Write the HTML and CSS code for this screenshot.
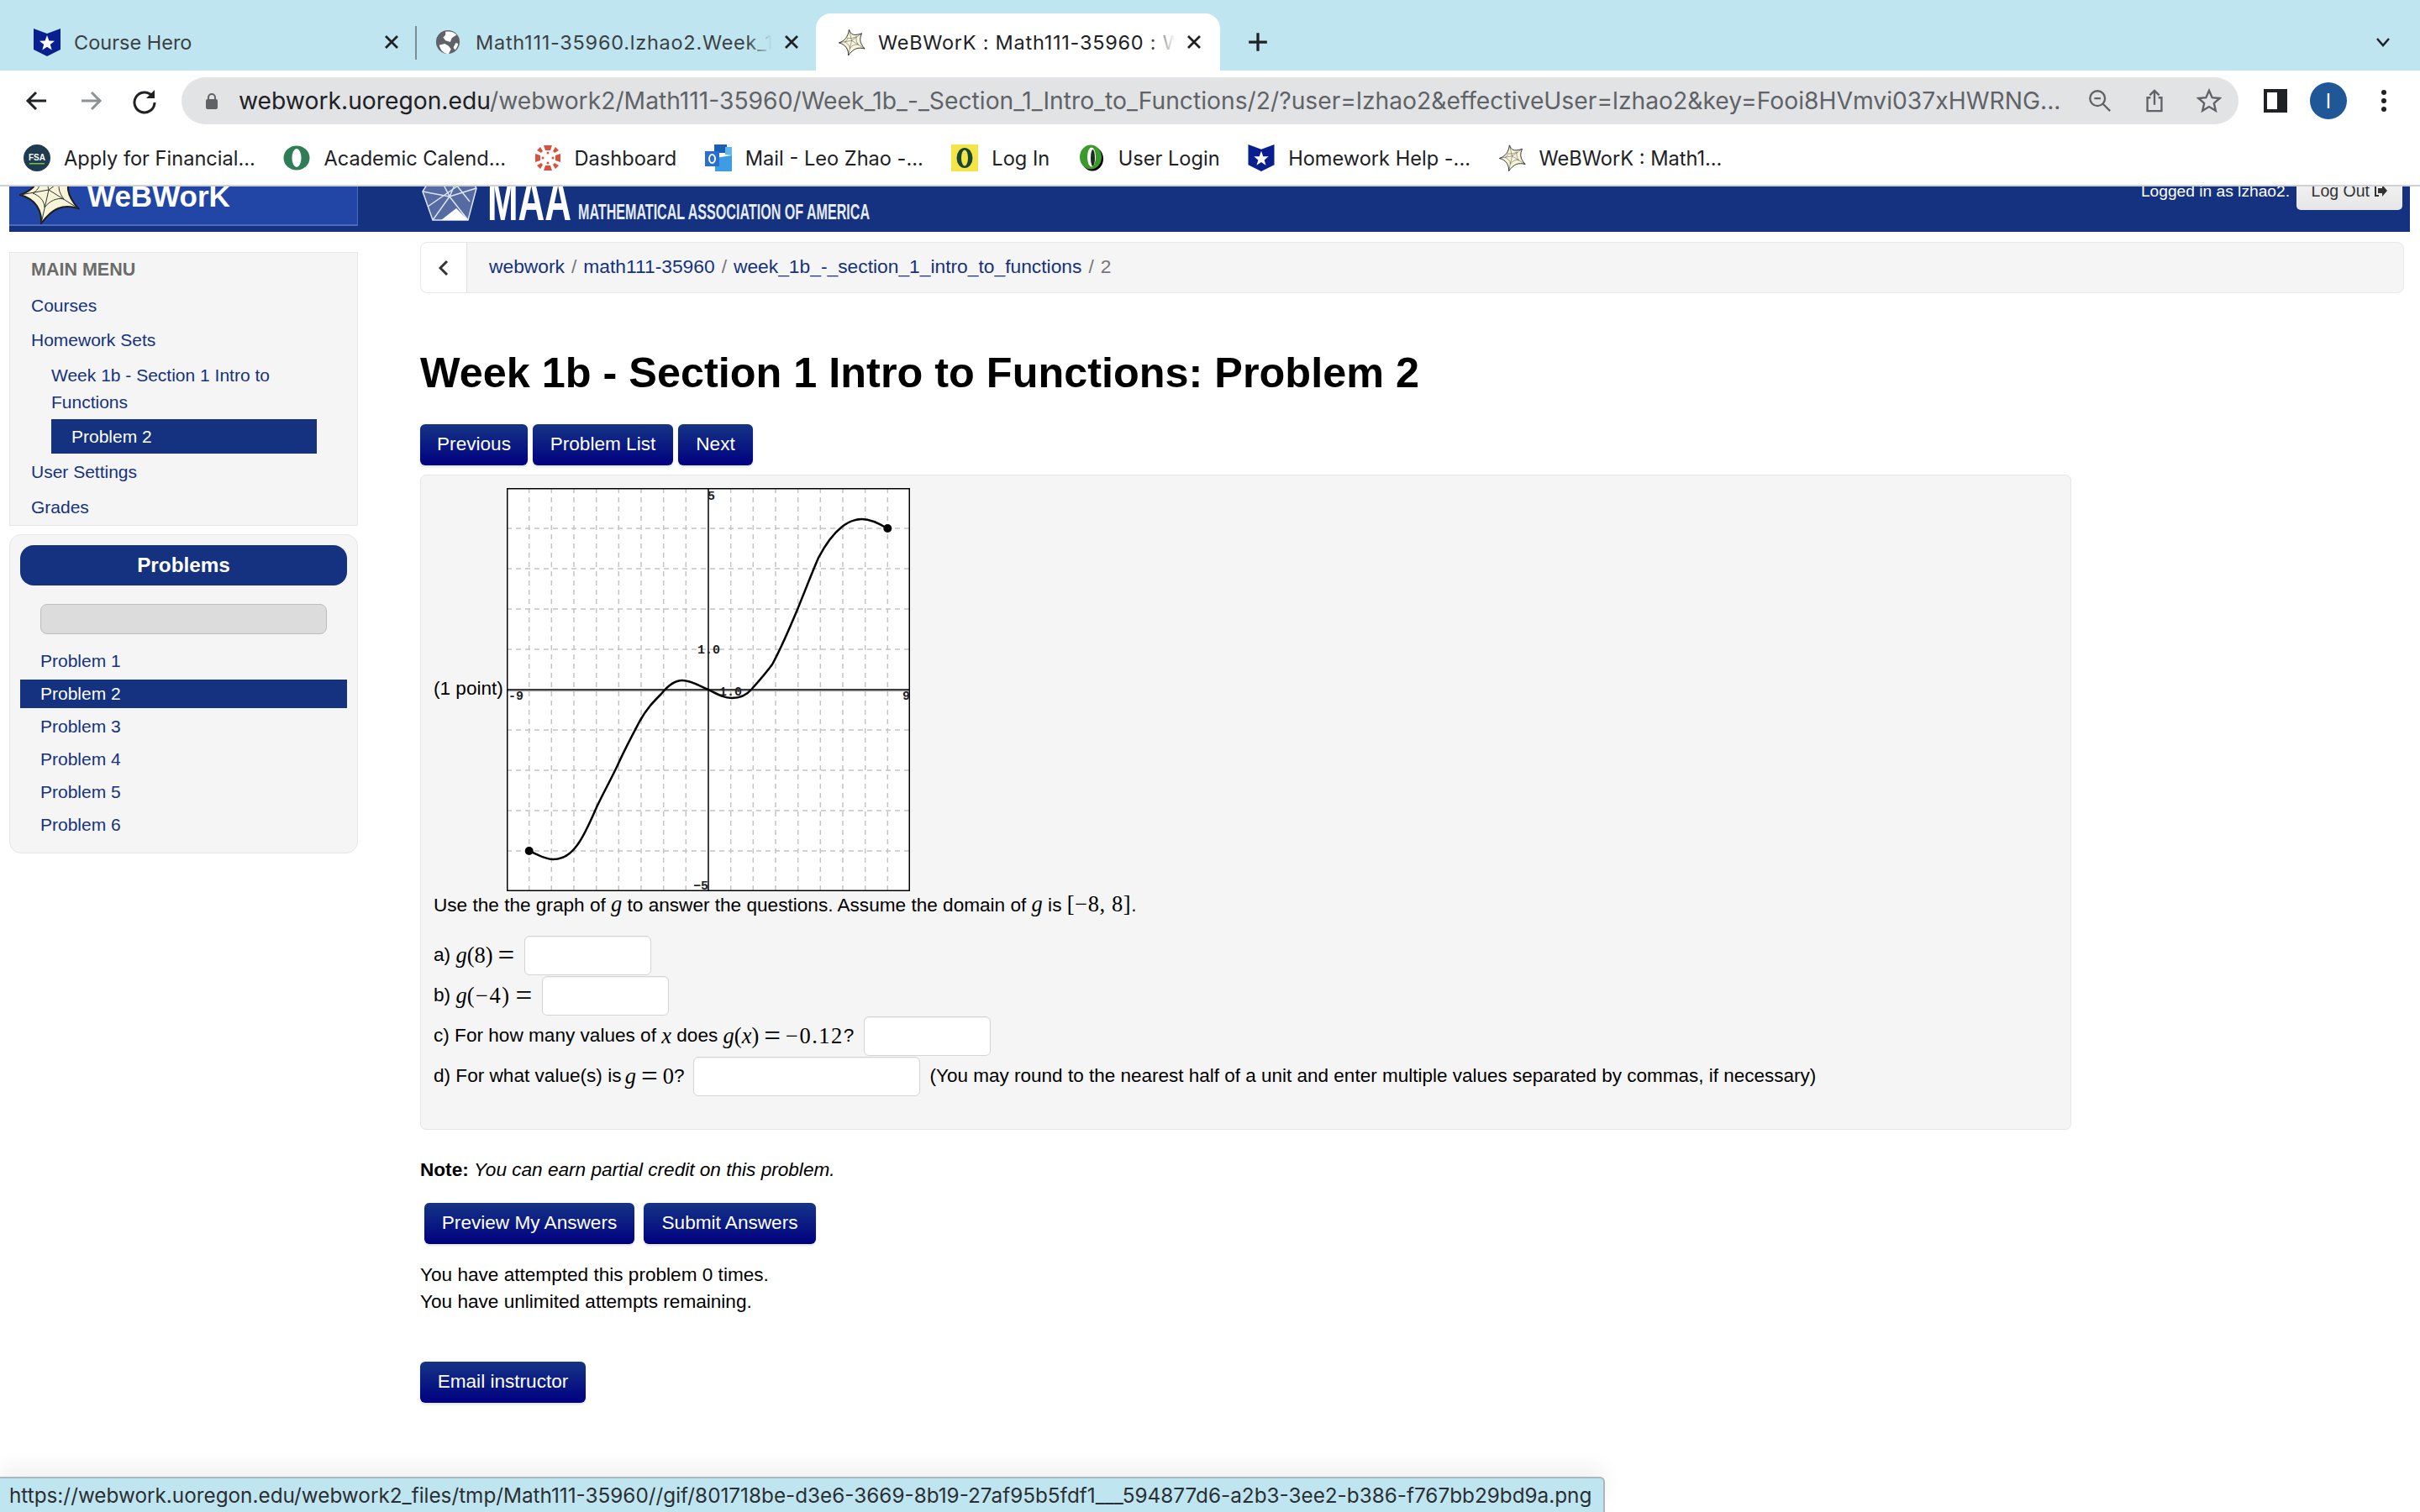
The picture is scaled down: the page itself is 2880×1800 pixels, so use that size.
FILE: index.html
```html
<!DOCTYPE html>
<html lang="en">
<head>
<meta charset="utf-8">
<title>WeBWorK : Math111-35960</title>
<link rel="stylesheet" href="styles.css">
</head>
<body>
<svg class="defs" width="0" height="0" aria-hidden="true">
  <symbol id="shield" viewBox="0 0 32 33">
    <path fill="#0a1f8f" d="M0 0 16 6 32 0V25L16 33 0 25Z"/>
    <path fill="#fff" d="M16 8l2.4 6.6 6.6.2-5.2 4.2 1.9 6.6-5.7-3.9-5.7 3.9 1.9-6.6L7 14.800l6.600-.2Z"/>
  </symbol>
  <symbol id="web" viewBox="0 0 72 72">
    <path class="web-fill" d="M28 2C33 14 38 20 62 12 56 26 55 36 70 53 52 48 40 52 26 71 27 56 20 42 1 37 16 32 25 22 28 2Z"/>
    <path class="web-line" fill="none" d="M28 2 35 31 62 12M35 31 70 53M35 31 26 71M35 31 1 37M24 24C30 26 40 25 48 20 46 28 47 34 53 42 45 40 36 44 30 52 30 44 24 38 16 35 21 32 24 28 24 24Z"/>
  </symbol>
  <symbol id="close" viewBox="0 0 18 18">
    <path fill="none" stroke="#202124" stroke-width="2.800" d="M2 2 16 16M16 2 2 16"/>
  </symbol>
</svg>

<div class="chrome">
  <div class="tabstrip">
    <div class="tab tab-one">
      <svg class="fav"><use href="#shield"/></svg>
      <span class="tab-title">Course Hero</span>
      <svg class="tab-x"><use href="#close"/></svg>
    </div>
    <div class="tab tab-two">
      <svg class="fav" viewBox="0 0 32 32"><circle cx="16" cy="16" r="15" fill="#5f6368"/><path fill="#fff" d="M13 3c5-1 11 0 14 4l-6 4-2 5-6-2-3-4 3-3ZM5 20l7-2 5 3 3 4-3 6c-6 0-10-4-12-11ZM26 17l3 1c0 3-2 6-4 8l-2-3Z"/></svg>
      <span class="tab-title fade">Math111-35960.lzhao2.Week_1</span>
      <svg class="tab-x"><use href="#close"/></svg>
    </div>
    <div class="tab tab-active">
      <svg class="fav web-fav"><use href="#web"/></svg>
      <span class="tab-title fade fade-white">WeBWorK : Math111-35960 : Week</span>
      <svg class="tab-x"><use href="#close"/></svg>
    </div>
    <svg class="new-tab" viewBox="0 0 24 24"><path d="M12 2V22M2 12H22"/></svg>
    <svg class="tab-menu" viewBox="0 0 20 12"><path d="M3 2 10 10 17 2"/></svg>
  </div>

  <div class="toolbar">
    <svg class="tb-icon" viewBox="0 0 32 32"><path class="st-dark" d="M27 16H6M15 6 5 16 15 26"/></svg>
    <svg class="tb-icon" viewBox="0 0 32 32"><path class="st-gray" d="M5 16H26M17 6 27 16 17 26"/></svg>
    <svg class="tb-icon" viewBox="0 0 32 32"><path class="st-dark" d="M25 10A12 12 0 1 0 28 18"/><path fill="#202124" d="M28 3V13H18Z"/></svg>
    <div class="omnibox">
      <svg class="lock" viewBox="0 0 16 20"><path fill="none" stroke="#5f6368" stroke-width="2" d="M4 9V6a4 4 0 0 1 8 0V9"/><rect x="1" y="8" width="14" height="12" rx="2" fill="#5f6368"/></svg>
      <div class="url"><span class="url-host">webwork.uoregon.edu</span>/webwork2/Math111-35960/Week_1b_-_Section_1_Intro_to_Functions/2/?user=lzhao2&amp;effectiveUser=lzhao2&amp;key=Fooi8HVmvi037xHWRNG...</div>
      <svg class="om-icon first" viewBox="0 0 32 32"><circle cx="13" cy="13" r="9.500" class="st-mid"/><path class="st-mid" d="M20 20 29 29M9 13H17"/></svg>
      <svg class="om-icon" viewBox="0 0 32 32"><path class="st-mid" d="M11 12H7V29H25V12H21M16 21V3M10 9 16 3 22 9"/></svg>
      <svg class="om-icon" viewBox="0 0 32 32"><path class="st-mid" d="M16 3l3.900 8.900 9.600.9-7.300 6.300 2.200 9.400L16 23.500l-8.400 5 2.200-9.400L2.500 12.800l9.600-.9Z"/></svg>
    </div>
    <svg class="side-panel" viewBox="0 0 28 28"><path fill="#202124" fill-rule="evenodd" d="M0 0H28V28H0ZM4 4V24H16V4Z"/></svg>
    <div class="avatar">l</div>
    <svg class="dots" viewBox="0 0 8 28"><circle cx="4" cy="4" r="3"/><circle cx="4" cy="14" r="3"/><circle cx="4" cy="24" r="3"/></svg>
  </div>

  <div class="bookmarks">
    <div class="bm">
      <svg class="bm-ic" viewBox="0 0 32 32"><circle cx="16" cy="16" r="16" fill="#1e3b50"/><text x="16" y="19" class="fsa">FSA</text><rect x="7" y="22" width="18" height="1.500" fill="#7ac143"/></svg>
      <span>Apply for Financial...</span>
    </div>
    <div class="bm">
      <svg class="bm-ic" viewBox="0 0 32 32"><ellipse cx="16" cy="16" rx="15.500" ry="14.500" fill="#2f7d57"/><ellipse cx="16" cy="16" rx="5.500" ry="11" fill="#fff"/></svg>
      <span>Academic Calend...</span>
    </div>
    <div class="bm">
      <svg class="bm-ic" viewBox="0 0 32 32"><g fill="#d9503c"><path d="M11 1h10l-2 6h-6ZM11 31h10l-2-6h-6ZM1 11v10l6-2v-6ZM31 11v10l-6-2v-6ZM25 3l4 4-5 3-2-2ZM7 3 3 7l5 3 2-2ZM25 29l4-4-5-3-2 2ZM7 29l-4-4 5-3 2 2Z"/><circle cx="16" cy="10" r="1.500"/><circle cx="16" cy="22" r="1.500"/><circle cx="10" cy="16" r="1.500"/><circle cx="22" cy="16" r="1.500"/></g></svg>
      <span>Dashboard</span>
    </div>
    <div class="bm">
      <svg class="bm-ic" viewBox="0 0 32 32"><path fill="#1a5fb4" d="M11 0H26V10H11Z"/><path fill="#5db7ee" d="M24 3H32V13L24 12Z"/><path fill="#3d9ce6" d="M12 16 32 13V32H12Z"/><rect y="8" width="17" height="18" fill="#2a6fce"/><ellipse cx="8.500" cy="17" rx="3.500" ry="5" fill="none" stroke="#fff" stroke-width="2"/></svg>
      <span>Mail - Leo Zhao -...</span>
    </div>
    <div class="bm">
      <svg class="bm-ic" viewBox="0 0 32 32"><rect width="32" height="32" fill="#f5e447"/><ellipse cx="16" cy="16" rx="9.500" ry="12" fill="#154733"/><ellipse cx="16" cy="16" rx="4" ry="9.500" fill="#f5e447"/></svg>
      <span>Log In</span>
    </div>
    <div class="bm">
      <svg class="bm-ic" viewBox="0 0 32 32"><ellipse cx="17" cy="17" rx="13" ry="14.500" fill="#000"/><ellipse cx="15" cy="15" rx="13" ry="14.500" fill="#3b9a2a"/><ellipse cx="16" cy="15" rx="5" ry="11.500" fill="#fff"/><ellipse cx="17.500" cy="16" rx="2.500" ry="10" fill="#1b2b20"/></svg>
      <span>User Login</span>
    </div>
    <div class="bm">
      <svg class="bm-ic"><use href="#shield"/></svg>
      <span>Homework Help -...</span>
    </div>
    <div class="bm">
      <svg class="bm-ic web-fav"><use href="#web"/></svg>
      <span>WeBWorK : Math1...</span>
    </div>
  </div>
</div>

<div class="page">
  <header class="site-head">
    <div class="brand">
      <svg class="brand-star"><use href="#web"/></svg>
      <span class="brand-name">WeBWorK</span>
    </div>
    <svg class="maa" viewBox="0 0 540 90">
      <path fill="rgba(255,255,255,.28)" d="M4 38 20 12 52 8 68 34 58 72 16 72Z"/>
      <g fill="none" stroke="#dfe6f8" stroke-width="1.500">
        <path d="M4 38 20 12 52 8 68 34 58 72 16 72Z"/>
        <path d="M20 12 36 44 52 8M4 38 36 44 68 34M36 44 16 72M36 44 58 72M12 28 44 30M28 10 60 50M10 56 62 20"/>
      </g>
      <path fill="#fff" d="M26 72 44 58 58 72Z"/>
      <text class="maa-big" x="81" y="72" textLength="100" lengthAdjust="spacingAndGlyphs">MAA</text>
      <text class="maa-small" x="189" y="71" textLength="347" lengthAdjust="spacingAndGlyphs">MATHEMATICAL ASSOCIATION OF AMERICA</text>
    </svg>
    <div class="login">
      <span class="login-text">Logged in as lzhao2.</span>
      <a class="logout">Log Out <svg class="logout-ic" viewBox="0 0 16 14"><path fill="none" stroke="#333" stroke-width="2" d="M6 1H2V13H6"/><path fill="#333" d="M5 4H10V0L16 7 10 14V10H5Z"/></svg></a>
    </div>
  </header>

  <div class="columns">
    <aside class="sidebar">
      <nav class="menu">
        <div class="menu-head">MAIN MENU</div>
        <a class="menu-item first">Courses</a>
        <a class="menu-item">Homework Sets</a>
        <a class="menu-sub">Week 1b - Section 1 Intro to Functions</a>
        <a class="menu-cur">Problem 2</a>
        <a class="menu-item tight">User Settings</a>
        <a class="menu-item">Grades</a>
      </nav>
      <nav class="probs">
        <div class="probs-head">Problems</div>
        <div class="probs-bar"></div>
        <ul class="probs-list">
          <li>Problem 1</li>
          <li class="on">Problem 2</li>
          <li>Problem 3</li>
          <li>Problem 4</li>
          <li>Problem 5</li>
          <li>Problem 6</li>
        </ul>
      </nav>
    </aside>

    <main class="main">
      <div class="crumbs">
        <div class="crumb-back"><svg viewBox="0 0 12 20"><path d="M10 2 2 10 10 18"/></svg></div>
        <div class="crumb-trail"><a>webwork</a><i>/</i><a>math111-35960</a><i>/</i><a>week_1b_-_section_1_intro_to_functions</a><i>/</i><b>2</b></div>
      </div>
      <h1 class="title">Week 1b - Section 1 Intro to Functions: Problem 2</h1>
      <div class="nav-btns">
        <a class="btn b-prev">Previous</a>
        <a class="btn b-list">Problem List</a>
        <a class="btn b-next">Next</a>
      </div>

      <section class="well">
        <div class="fig-row">
          <span class="points">(1 point)</span>
          <svg class="graph" viewBox="0 0 480 480">
            <rect width="480" height="480" fill="#fff"/>
            <path class="grid" d="M26.700 0V480M53.300 0V480M80 0V480M106.700 0V480M133.300 0V480M160 0V480M186.700 0V480M213.300 0V480M266.700 0V480M293.300 0V480M320 0V480M346.700 0V480M373.300 0V480M400 0V480M426.700 0V480M453.300 0V480M0 48H480M0 96H480M0 144H480M0 192H480M0 288H480M0 336H480M0 384H480M0 432H480"/>
            <path class="axis-soft" d="M0 241.500H480"/>
            <path class="axis" d="M240 0V480M0 240H480"/>
            <rect x="0.750" y="0.750" width="478.500" height="478.500" class="frame"/>
            <path class="curve" d="M26.700 432C36 436 45 442 55 442 68 442 77 435 84 425 93 413 100 396 107 380 116 361 124 347 132 330 140 312 148 297 157 280 166 263 175 254 184 245 192 235 200 229 209 229 220 229 230 236 240 240 250 245 258 250 268 250 278 250 285 247 291 240 300 230 308 221 316 210 327 190 336 168 345 147 354 125 362 104 371 83 379 68 388 55 398 47 406 40 414 37 423 37 433 37 443 42 453 48"/>
            <circle cx="26.700" cy="432" r="5"/>
            <circle cx="453.300" cy="48" r="5"/>
            <text class="tick" x="239" y="14">5</text>
            <text class="tick" x="222" y="478">−5</text>
            <text class="tick" x="227" y="197">1.0</text>
            <text class="tick" x="253" y="247">1.0</text>
            <text class="tick" x="2" y="252">-9</text>
            <text class="tick" x="471" y="252">9</text>
          </svg>
        </div>
        <p class="intro">Use the the graph of <span class="mi">g</span> to answer the questions. Assume the domain of <span class="mi">g</span> is <span class="mn spaced">[−8, 8]</span>.</p>
        <div class="q">a) <span class="mi">g</span><span class="mn">(8)</span><span class="mo end">=</span><input class="ans" type="text"></div>
        <div class="q">b) <span class="mi">g</span><span class="mn spaced-wide">(−4)</span><span class="mo end">=</span><input class="ans" type="text"></div>
        <div class="q">c) For how many values of <span class="mi">x</span> does <span class="mi">g</span><span class="mn">(</span><span class="mi">x</span><span class="mn">)</span><span class="mo">=</span><span class="mn spaced-wide">−0.12</span>?<input class="ans" type="text"></div>
        <div class="q">d) For what value(s) is <span class="mi pull">g</span><span class="mo">=</span><span class="mn">0</span>?<input class="ans wide" type="text"><span class="hint">(You may round to the nearest half of a unit and enter multiple values separated by commas, if necessary)</span></div>
      </section>

      <p class="note"><b>Note:</b> <em>You can earn partial credit on this problem.</em></p>
      <div class="submit-btns">
        <a class="btn b-preview">Preview My Answers</a>
        <a class="btn b-submit">Submit Answers</a>
      </div>
      <p class="attempts">You have attempted this problem 0 times.<br>You have unlimited attempts remaining.</p>
      <a class="btn b-email">Email instructor</a>
    </main>
  </div>
</div>

<div class="status">https://webwork.uoregon.edu/webwork2_files/tmp/Math111-35960//gif/801718be-d3e6-3669-8b19-27af95b5fdf1___594877d6-a2b3-3ee2-b386-f767bb29bd9a.png</div>
</body>
</html>
```

FILE: styles.css
```css
* { box-sizing: border-box; }
html, body { margin: 0; padding: 0; }
body {
  width: 2880px;
  height: 1800px;
  overflow: hidden;
  position: relative;
  background: #fff;
  color: #000;
  font-family: "Liberation Sans", Arial, sans-serif;
  font-size: 22.600px;
}
.defs { position: absolute; }
a { color: inherit; text-decoration: none; }
p { margin: 0; }
.web-fill { fill: #f7f4d8; stroke: #1d1d1d; stroke-width: 2; }
.web-line { stroke: #333; stroke-width: 1; }
.web-fav .web-fill { fill: #dcdcc8; stroke: #8d8d80; }
.web-fav .web-line { stroke: #77776a; }

/* browser chrome */
.chrome { position: relative; z-index: 2; background: #fff; border-bottom: 2px solid #cfd2d4; height: 222px; }
.tabstrip { height: 84px; background: #bfe6f0; display: flex; align-items: flex-end; font-family: Inter, "Noto Sans", sans-serif; font-size: 23.500px; color: #3c4043; }
.tab { height: 68px; display: flex; align-items: center; position: relative; }
.tab-one { width: 495px; padding: 0 20px 0 40px; }
.tab-two { width: 476px; padding: 0 20px 0 40px; }
.tab-two::before { content: ""; position: absolute; left: -1px; top: 15px; height: 40px; width: 2px; background: #7d8c92; }
.tab-active { width: 481px; padding: 0 22px 0 27px; background: #fff; border-radius: 18px 18px 0 0; color: #202124; }
.fav { width: 32px; height: 33px; flex: none; margin-right: 16px; }
.tab-two .fav { width: 30px; height: 30px; margin-left: -17px; margin-right: 18px; }
.tab-active .fav { margin-left: 0; margin-right: 15px; }
.tab-title { flex: 1; white-space: nowrap; overflow: hidden; position: relative; }
.tab-two .tab-title, .tab-active .tab-title { letter-spacing: .75px; }
.fade::after { content: ""; position: absolute; right: 0; top: 0; bottom: 0; width: 30px; background: linear-gradient(90deg, rgba(191,230,240,0), #bfe6f0); }
.fade-white::after { background: linear-gradient(90deg, rgba(255,255,255,0), #fff); }
.tab-x { flex: none; width: 18px; height: 18px; margin-left: 14px; }
.new-tab { width: 26px; height: 26px; margin: 0 0 21px 32px; }
.new-tab path { stroke: #202124; stroke-width: 3; fill: none; }
.tab-menu { width: 20px; height: 12px; margin: 0 34px 28px auto; }
.tab-menu path { stroke: #202124; stroke-width: 2.500; fill: none; }

.toolbar { height: 72px; display: flex; align-items: center; padding-left: 28px; }
.tb-icon { width: 32px; height: 32px; margin-right: 32px; flex: none; }
.st-dark { stroke: #202124; stroke-width: 3; fill: none; }
.st-gray { stroke: #8e9194; stroke-width: 3; fill: none; }
.st-mid { stroke: #5f6368; stroke-width: 2.500; fill: none; }
.omnibox { width: 2448px; margin-left: -4px; height: 56px; border-radius: 28px; background: #e1e3e4; display: flex; align-items: center; padding-left: 28px; flex: none; }
.lock { width: 16px; height: 20px; flex: none; margin-right: 24px; }
.url { width: 2200px; flex: none; white-space: nowrap; overflow: hidden; font-family: Inter, "Noto Sans", sans-serif; font-size: 28.260px; color: #5f6368; }
.url-host { color: #202124; }
.om-icon { width: 30px; height: 30px; flex: none; margin-left: 35px; }
.om-icon.first { margin-left: 0; }
.side-panel { width: 28px; height: 28px; flex: none; margin-left: 30px; }
.avatar { width: 44px; height: 44px; flex: none; margin-left: 27px; border-radius: 50%; background: #1f5797; color: #fff; display: flex; align-items: center; justify-content: center; font-family: Inter, sans-serif; font-size: 24px; }
.dots { width: 8px; height: 28px; flex: none; margin-left: 40px; }
.dots circle { fill: #202124; }

.bookmarks { height: 64px; display: flex; align-items: center; padding-left: 28px; gap: 33.500px; font-family: Inter, "Noto Sans", sans-serif; font-size: 23.600px; color: #202124; }
.bm { display: flex; align-items: center; gap: 16px; white-space: nowrap; }
.bm-ic { width: 32px; height: 32px; flex: none; }
.fsa { font: 700 10px "Liberation Sans", sans-serif; fill: #fff; text-anchor: middle; }

/* scrolled page */
.page { margin-top: -40px; padding: 0 12px 0 11px; }
.site-head { height: 94px; background: #14327f; display: flex; color: #fff; }
.brand { width: 415px; height: 87px; flex: none; background: #2246a6; border: solid #4c6bbd; border-width: 0 1px 2px 0; display: flex; align-items: flex-end; padding: 0 0 13px 12px; }
.brand-star { width: 72px; height: 72px; flex: none; margin-bottom: -13px; }
.brand-name { font-size: 35px; font-weight: 700; line-height: 40px; margin-left: 9px; }
.maa { width: 540px; height: 90px; flex: none; margin: 8px 0 0 73px; }
.maa-big { font: 700 70px "Liberation Sans", sans-serif; fill: #fff; }
.maa-small { font: 700 25px "Liberation Sans", sans-serif; fill: #e6ebf8; }
.login { margin-left: auto; display: flex; height: 56px; align-items: flex-start; padding-right: 9px; }
.login-text { font-size: 19.200px; line-height: 56px; margin-top: 18px; }
.logout { width: 126px; height: 48px; margin: 20px 0 0 8px; padding-top: 14px; background: linear-gradient(#f7f7f7, #e6e6e6); border-radius: 0 0 5px 5px; color: #333; font-size: 19.500px; text-align: center; white-space: nowrap; }
.logout-ic { width: 16px; height: 14px; }

.columns { display: flex; align-items: flex-start; margin-top: 24px; }
.sidebar { width: 415px; flex: none; color: #14327f; font-size: 21px; }
.menu { height: 326px; background: #f5f5f5; border: 1px solid #e6e6e6; padding: 0 0 0 25px; }
.menu-head { height: 40px; line-height: 40px; color: #6b6b6b; font-weight: 700; font-size: 21.500px; }
.menu-item { display: block; height: 42px; line-height: 42px; }
.menu-item.first { margin-top: 2px; height: 41px; }
.menu-sub { display: block; margin: 5px 0 0 24px; line-height: 32px; width: 310px; }
.menu-cur { display: block; width: 316px; height: 41px; line-height: 41px; margin: 4px 0 1px 24px; padding-left: 24px; background: #14327f; color: #fff; }
.probs { height: 380px; margin-top: 10px; background: #f5f5f5; border: 1px solid #e6e6e6; border-radius: 14px; padding: 12px 12px 0; }
.probs-head { height: 48px; line-height: 48px; border-radius: 16px; background: #14327f; color: #fff; font-weight: 700; font-size: 24.300px; text-align: center; }
.probs-bar { height: 36px; margin: 22px 24px 0; background: #dcdcdc; border: 1px solid #bdbdbd; border-radius: 8px; }
.probs-list { list-style: none; margin: 15px 0 0; padding: 0; }
.probs-list li { height: 34px; line-height: 34px; margin-bottom: 5px; padding-left: 24px; }
.probs-list li.on { background: #14327f; color: #fff; }

.main { flex: 1; min-width: 0; margin: -12px 0 0 74px; }
.crumbs { display: flex; height: 61px; margin-right: 7px; border: 1px solid #e8e8e8; border-radius: 8px; background: #f5f5f5; }
.crumb-back { width: 55px; flex: none; background: #fff; border-right: 1px solid #e0e0e0; border-radius: 8px 0 0 8px; display: flex; align-items: center; justify-content: center; }
.crumb-back svg { width: 12px; height: 20px; }
.crumb-back path { fill: none; stroke: #333; stroke-width: 3; }
.crumb-trail { padding-left: 26px; line-height: 57px; font-size: 22.800px; color: #14327f; }
.crumb-trail i { font-style: normal; color: #777; padding: 0 8px; }
.crumb-trail b { font-weight: 400; color: #777; }
.title { margin: 63px 0 0; height: 64px; line-height: 64px; font-size: 50.400px; font-weight: 700; letter-spacing: 0; }
.nav-btns { display: flex; gap: 6px; margin-top: 29px; }
.btn { display: inline-block; height: 49px; line-height: 48px; text-align: center; color: #fff; font-size: 22.600px; border-radius: 6px; background: linear-gradient(#153585, #000080); box-shadow: 0 2px 3px rgba(0,0,0,.12); }
.b-prev { width: 128px; }
.b-list { width: 167px; }
.b-next { width: 89px; }
.well { margin-top: 11px; width: 1965px; height: 780px; background: #f5f5f5; border: 1px solid #e6e6e6; border-radius: 7px; padding: 15px 0 0 15px; }
.fig-row { display: flex; align-items: center; }
.points { width: 87px; flex: none; margin-top: -3px; }
.graph { width: 480px; height: 480px; flex: none; }
.grid { stroke: #c4c4c4; stroke-width: 1.500; stroke-dasharray: 6 5; fill: none; }
.axis { stroke: #000; stroke-width: 1.500; fill: none; }
.axis-soft { stroke: #aaa; stroke-width: 1.500; fill: none; }
.frame { fill: none; stroke: #000; stroke-width: 1.500; }
.curve { fill: none; stroke: #000; stroke-width: 2.500; }
.tick { font: 700 15px "Liberation Mono", monospace; fill: #222; }
.intro { height: 32px; line-height: 32px; margin-top: 1px; }
.mi { font-family: "Liberation Serif", serif; font-style: italic; font-size: 26.500px; line-height: 1; }
.mi.pull { margin-left: -2px; }
.mn { font-family: "Liberation Serif", serif; font-size: 26.500px; line-height: 1; }
.spaced { letter-spacing: .6px; }
.spaced-wide { letter-spacing: 1.500px; }
.mo { font-family: "Liberation Serif", serif; font-size: 35px; line-height: 1; margin: 0 6px; }
.mo.end { margin-right: 0; }
.q { display: flex; align-items: center; height: 48px; white-space: pre; }
.intro + .q { margin-top: 19px; }
.ans { width: 151px; height: 47px; margin-left: 12px; background: #fff; border: 1px solid #d4d4d4; border-radius: 6px; padding: 0; box-shadow: inset 0 1px 1px rgba(0,0,0,.06); flex: none; }
.ans.wide { width: 270px; margin-left: 10px; }
.hint { margin-left: 12px; font-size: 22.500px; }
.note { margin-top: 32px; line-height: 32px; }
.submit-btns { display: flex; gap: 11px; margin: 23px 0 0 5px; }
.b-preview { width: 250px; }
.b-submit { width: 205px; }
.attempts { margin-top: 21px; line-height: 32px; }
.b-email { width: 197px; margin-top: 55px; }

.status { position: absolute; left: 0; bottom: 0; height: 42px; line-height: 40px; padding: 0 14px 0 11px; background: #bfe6f0; border: solid #aab7bb; border-width: 2px 2px 0 0; border-radius: 0 6px 0 0; box-shadow: 0 -14px 24px rgba(0,0,0,.05); font-family: Inter, "Noto Sans", sans-serif; font-size: 24.300px; color: #2b2f33; white-space: nowrap; }
```
